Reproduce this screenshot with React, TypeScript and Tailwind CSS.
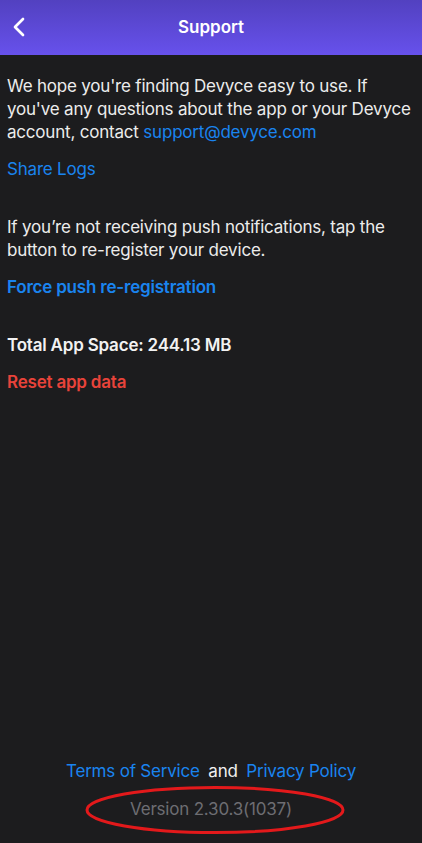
import { ChevronLeft } from "lucide-react";

const font = { fontFamily: "Inter, 'Noto Sans', sans-serif" };

const App = () => {
  return (
    <div className="w-[422px] h-[843px] bg-[#1c1c1e] flex flex-col text-[#ececec]" style={font}>
      <div className="h-[55px] shrink-0 bg-gradient-to-b from-[#5241c0] to-[#6751ec] flex items-center relative">
        <ChevronLeft className="absolute left-[3px] top-[11px] text-white" size={32} strokeWidth={2} />
        <h1 className="w-full text-center text-[17px] font-semibold text-white">Support</h1>
      </div>

      <div className="flex-1 flex flex-col pl-[7px] pr-[3px] pt-[20px] text-[17px] leading-[23px] tracking-[-0.2px]">
        <p>
          We hope you're finding Devyce easy to use. If you've any questions about the app or your Devyce account,
          contact <span className="text-[#1a84ef]">support@devyce.com</span>
        </p>
        <button className="text-left text-[#1a84ef] mt-[14px]">Share Logs</button>

        <p className="mt-[35px]">
          If you’re not receiving push notifications, tap the button to re-register your device.
        </p>
        <button className="text-left text-[#1a84ef] font-semibold mt-[14px]">Force push re-registration</button>

        <p className="font-semibold text-[#f2f2f2] mt-[35px]">Total App Space: 244.13 MB</p>
        <button className="text-left text-[#e8433a] font-semibold mt-[14px]">Reset app data</button>

        <div className="mt-auto flex flex-col items-center pb-[22px] pr-[4px]">
          <p className="text-[#1a84ef]">
            Terms of Service <span className="text-[#f0f0f0] mx-[4px]">and</span> Privacy Policy
          </p>
          <div className="relative mt-[15px]">
            <p className="text-[#6d6d72]">Version 2.30.3(1037)</p>
            <svg className="absolute left-[-46px] top-[-13px]" width="262" height="50" viewBox="0 0 262 50">
              <ellipse cx="131" cy="25" rx="128" ry="22.5" fill="none" stroke="#e3191b" strokeWidth="3" />
            </svg>
          </div>
        </div>
      </div>
    </div>
  );
};

export default App;
